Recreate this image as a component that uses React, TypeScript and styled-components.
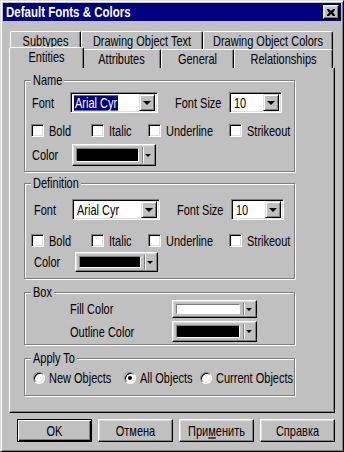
import React from "react";
import styled, { createGlobalStyle, css } from "styled-components";

const GlobalStyle = createGlobalStyle`
  html, body {
    margin: 0;
    padding: 0;
    background: #c0c0c0;
  }
  body {
    font-family: "Liberation Sans", Arial, sans-serif;
    font-size: 11px;
    color: #000;
  }
`;

// the dialog font is tall and narrow, stretch Arial-width text vertically
const tall = css`
  display: inline-block;
  transform: scaleY(1.27);
`;

const Text = styled.span`
  ${tall}
`;

const Window = styled.div`
  box-sizing: border-box;
  width: 344px;
  height: 452px;
  padding: 2px;
  background: #c0c0c0;
  border: 1px solid;
  border-color: #dfdfdf #000 #000 #dfdfdf;
  box-shadow: inset 1px 1px 0 #fff, inset -1px -1px 0 #808080;
  display: flex;
  flex-direction: column;
`;

const TitleBar = styled.div`
  height: 18px;
  background: #000080;
  color: #fff;
  display: flex;
  align-items: center;
  justify-content: space-between;
  padding: 0 2px 0 3px;
`;

const TitleText = styled.span`
  ${tall}
  font-weight: bold;
  font-size: 11.5px;
  transform: scaleY(1.2);
`;

const CloseButton = styled.button`
  box-sizing: border-box;
  width: 16px;
  height: 14px;
  padding: 0;
  background: #c0c0c0;
  border: 1px solid;
  border-color: #fff #000 #000 #fff;
  box-shadow: inset -1px -1px 0 #808080, inset 1px 1px 0 #dfdfdf;
  display: flex;
  align-items: center;
  justify-content: center;
`;

const Body = styled.div`
  padding: 10px 6px 0 6px;
  display: flex;
  flex-direction: column;
`;

const TabRow = styled.div<{ $indent: number }>`
  display: flex;
  height: 18px;
  padding-left: ${(p) => p.$indent}px;
`;

const Tab = styled.div<{ $w: number; $active?: boolean }>`
  box-sizing: border-box;
  width: ${(p) => (p.$active ? p.$w + 4 : p.$w)}px;
  height: ${(p) => (p.$active ? 21 : 19)}px;
  margin: ${(p) => (p.$active ? "-2px -2px 0 -2px" : "0")};
  background: #c0c0c0;
  border-top: 1px solid #fff;
  border-left: 1px solid #fff;
  border-right: 1px solid #000;
  border-radius: 2px 2px 0 0;
  box-shadow: inset -1px 0 0 #808080;
  display: flex;
  align-items: center;
  justify-content: center;
  padding-bottom: ${(p) => (p.$active ? 3 : 1)}px;
  position: relative;
  z-index: ${(p) => (p.$active ? 2 : 1)};
`;

const Panel = styled.div`
  box-sizing: border-box;
  height: 346px;
  border: 1px solid;
  border-color: #fff #000 #000 #fff;
  box-shadow: inset -1px -1px 0 #808080;
  padding: 12px 0 0 14px;
  display: flex;
  flex-direction: column;
`;

const Group = styled.div<{ $h: number; $mt?: number }>`
  box-sizing: border-box;
  width: 271px;
  height: ${(p) => p.$h}px;
  margin-top: ${(p) => p.$mt ?? 0}px;
  border: 1px solid #808080;
  box-shadow: inset 1px 1px 0 #fff, 1px 1px 0 #fff;
  display: flex;
  flex-direction: column;
`;

const Caption = styled.div`
  margin: -8px 0 0 6px;
  padding: 0 2px 0 2px;
  width: fit-content;
  line-height: 15px;
  background: #c0c0c0;
  span {
    ${tall}
  }
`;

const Row = styled.div<{ $mt: number; $pl?: number; $h: number }>`
  display: flex;
  align-items: center;
  height: ${(p) => p.$h}px;
  margin-top: ${(p) => p.$mt}px;
  padding-left: ${(p) => p.$pl ?? 7}px;
`;

const Label = styled.span<{ $w?: number; $ml?: number }>`
  width: ${(p) => (p.$w ? `${p.$w}px` : "auto")};
  margin-left: ${(p) => p.$ml ?? 0}px;
  white-space: nowrap;
  ${tall}
`;

const Combo = styled.div<{ $w: number }>`
  box-sizing: border-box;
  width: ${(p) => p.$w}px;
  height: 21px;
  background: #fff;
  border: 1px solid;
  border-color: #808080 #fff #fff #808080;
  box-shadow: inset 1px 1px 0 #000, inset -1px -1px 0 #dfdfdf;
  padding: 2px;
  display: flex;
  align-items: center;
`;

const ComboText = styled.span<{ $selected?: boolean }>`
  flex: 1;
  display: flex;
  align-items: center;
  height: 15px;
  padding-left: 1px;
  white-space: nowrap;
  span {
    ${tall}
    line-height: 12px;
    padding: 0 1px 0 1px;
    background: ${(p) => (p.$selected ? "#000080" : "transparent")};
    color: ${(p) => (p.$selected ? "#fff" : "#000")};
  }
`;

const DropButton = styled.div`
  box-sizing: border-box;
  width: 16px;
  height: 17px;
  background: #c0c0c0;
  border: 1px solid;
  border-color: #dfdfdf #000 #000 #dfdfdf;
  box-shadow: inset 1px 1px 0 #fff, inset -1px -1px 0 #808080;
  display: flex;
  align-items: center;
  justify-content: center;
`;

const Arrow = styled.div<{ $small?: boolean }>`
  width: 0;
  height: 0;
  border-left: ${(p) => (p.$small ? 3 : 4)}px solid transparent;
  border-right: ${(p) => (p.$small ? 3 : 4)}px solid transparent;
  border-top: ${(p) => (p.$small ? 3 : 4)}px solid #000;
`;

const ColorPicker = styled.div<{ $w: number; $h: number }>`
  box-sizing: border-box;
  width: ${(p) => p.$w}px;
  height: ${(p) => p.$h}px;
  background: #c0c0c0;
  border: 1px solid;
  border-color: #fff #000 #000 #fff;
  box-shadow: inset -1px -1px 0 #808080, inset 1px 1px 0 #dfdfdf;
  padding: 3px;
  display: flex;
  align-items: stretch;
`;

const Swatch = styled.div<{ $color: string }>`
  flex: 1;
  background: ${(p) => p.$color};
  border: 1px solid;
  border-color: #808080 #fff #fff #808080;
`;

const Divider = styled.div`
  width: 1px;
  margin: -1px 0 -1px 3px;
  background: #808080;
  box-shadow: 1px 0 0 #fff;
`;

const ArrowCell = styled.div`
  width: 9px;
  display: flex;
  align-items: center;
  justify-content: center;
`;

const CheckItem = styled.label<{ $w?: number }>`
  display: flex;
  align-items: center;
  width: ${(p) => (p.$w ? `${p.$w}px` : "auto")};
  white-space: nowrap;
`;

const CheckBox = styled.span`
  box-sizing: border-box;
  width: 13px;
  height: 13px;
  margin-right: 5px;
  background: #fff;
  border: 1px solid;
  border-color: #808080 #fff #fff #808080;
  box-shadow: inset 1px 1px 0 #000, inset -1px -1px 0 #dfdfdf;
`;

const Radio = styled.span<{ $checked?: boolean }>`
  box-sizing: border-box;
  width: 12px;
  height: 12px;
  margin-right: 4px;
  border-radius: 50%;
  background: #fff;
  border: 1px solid;
  border-color: #808080 #fff #fff #808080;
  box-shadow: inset 1px 1px 0 #000, inset -1px -1px 0 #dfdfdf;
  display: flex;
  align-items: center;
  justify-content: center;
  &::after {
    content: "";
    width: 4px;
    height: 4px;
    border-radius: 50%;
    background: ${(p) => (p.$checked ? "#000" : "transparent")};
  }
`;

const Footer = styled.div`
  display: flex;
  justify-content: flex-end;
  gap: 6px;
  margin-top: 6px;
`;

const Button = styled.button<{ $default?: boolean }>`
  box-sizing: border-box;
  width: 75px;
  height: 23px;
  padding: 0;
  font: inherit;
  color: #000;
  background: #c0c0c0;
  border: 1px solid;
  border-color: ${(p) => (p.$default ? "#000" : "#fff #000 #000 #fff")};
  box-shadow: ${(p) =>
    p.$default
      ? "inset 1px 1px 0 #fff, inset -1px -1px 0 #000, inset -2px -2px 0 #808080"
      : "inset -1px -1px 0 #808080, inset 1px 1px 0 #dfdfdf"};
  u {
    text-decoration: underline;
  }
`;

type FontGroupSpec = {
  title: string;
  top: number;
  h: number;
  selected: boolean;
  pl: number; // left inset of the font / colour rows
  gaps: [number, number, number]; // margin above font, checkbox and colour rows
  colorW: number;
  colorH: number;
  colorGap: number;
};

const fontGroups: FontGroupSpec[] = [
  { title: "Name", top: 0, h: 92, selected: true, pl: 7, gaps: [4, 11, 7], colorW: 84, colorH: 22, colorGap: 40 },
  { title: "Definition", top: 11, h: 96, selected: false, pl: 9, gaps: [8, 14, 5], colorW: 83, colorH: 20, colorGap: 41 },
];

const checks = [
  { text: "Bold", w: 60 },
  { text: "Italic", w: 57 },
  { text: "Underline", w: 81 },
  { text: "Strikeout" },
];

const CloseIcon = () => (
  <svg width="8" height="7" viewBox="0 0 8 7">
    <path d="M0 0h2l2 2 2-2h2v1L6 3.5 8 6v1H6L4 5 2 7H0V6l2-2.5L0 1z" fill="#000" />
  </svg>
);

const ColorBox = ({ color, w, h }: { color: string; w: number; h: number }) => (
  <ColorPicker $w={w} $h={h}>
    <Swatch $color={color} />
    <Divider />
    <ArrowCell>
      <Arrow $small />
    </ArrowCell>
  </ColorPicker>
);

const FontGroup = ({ title, top, h, selected, pl, gaps, colorW, colorH, colorGap }: FontGroupSpec) => (
  <Group $h={h} $mt={top}>
    <Caption>
      <span>{title}</span>
    </Caption>
    <Row $h={21} $mt={gaps[0]} $pl={pl}>
      <Label $w={38}>Font</Label>
      <Combo $w={88}>
        <ComboText $selected={selected}>
          <span>Arial Cyr</span>
        </ComboText>
        <DropButton>
          <Arrow />
        </DropButton>
      </Combo>
      <Label $w={54} $ml={17}>
        Font Size
      </Label>
      <Combo $w={53}>
        <ComboText>
          <span>10</span>
        </ComboText>
        <DropButton>
          <Arrow />
        </DropButton>
      </Combo>
    </Row>
    <Row $h={13} $mt={gaps[1]} $pl={6}>
      {checks.map((c) => (
        <CheckItem key={c.text} $w={c.w}>
          <CheckBox />
          <Text>{c.text}</Text>
        </CheckItem>
      ))}
    </Row>
    <Row $h={colorH} $mt={gaps[2]} $pl={pl}>
      <Label $w={colorGap}>Color</Label>
      <ColorBox color="#000" w={colorW} h={colorH} />
    </Row>
  </Group>
);

export default function App() {
  return (
    <>
      <GlobalStyle />
      <Window>
        <TitleBar>
          <TitleText>Default Fonts &amp; Colors</TitleText>
          <CloseButton aria-label="Close">
            <CloseIcon />
          </CloseButton>
        </TitleBar>
        <Body>
          <TabRow $indent={1}>
            <Tab $w={71}>
              <Text>Subtypes</Text>
            </Tab>
            <Tab $w={122}>
              <Text>Drawing Object Text</Text>
            </Tab>
            <Tab $w={130}>
              <Text>Drawing Object Colors</Text>
            </Tab>
          </TabRow>
          <TabRow $indent={2}>
            <Tab $w={71} $active>
              <Text>Entities</Text>
            </Tab>
            <Tab $w={79}>
              <Text>Attributes</Text>
            </Tab>
            <Tab $w={73}>
              <Text>General</Text>
            </Tab>
            <Tab $w={99}>
              <Text>Relationships</Text>
            </Tab>
          </TabRow>
          <Panel>
            {fontGroups.map((g) => (
              <FontGroup key={g.title} {...g} />
            ))}
            <Group $h={53} $mt={13}>
              <Caption>
                <span>Box</span>
              </Caption>
              <Row $h={18} $mt={0} $pl={45}>
                <Label $w={102}>Fill Color</Label>
                <ColorBox color="#fff" w={85} h={18} />
              </Row>
              <Row $h={21} $mt={3} $pl={45}>
                <Label $w={102}>Outline Color</Label>
                <ColorBox color="#000" w={85} h={21} />
              </Row>
            </Group>
            <Group $h={38} $mt={13}>
              <Caption>
                <span>Apply To</span>
              </Caption>
              <Row $h={15} $mt={4} $pl={8}>
                <CheckItem $w={91}>
                  <Radio />
                  <Text>New Objects</Text>
                </CheckItem>
                <CheckItem $w={76}>
                  <Radio $checked />
                  <Text>All Objects</Text>
                </CheckItem>
                <CheckItem>
                  <Radio />
                  <Text>Current Objects</Text>
                </CheckItem>
              </Row>
            </Group>
          </Panel>
          <Footer>
            <Button $default>
              <Text>OK</Text>
            </Button>
            <Button>
              <Text>Отмена</Text>
            </Button>
            <Button>
              <Text>
                При<u>м</u>енить
              </Text>
            </Button>
            <Button>
              <Text>Справка</Text>
            </Button>
          </Footer>
        </Body>
      </Window>
    </>
  );
}
